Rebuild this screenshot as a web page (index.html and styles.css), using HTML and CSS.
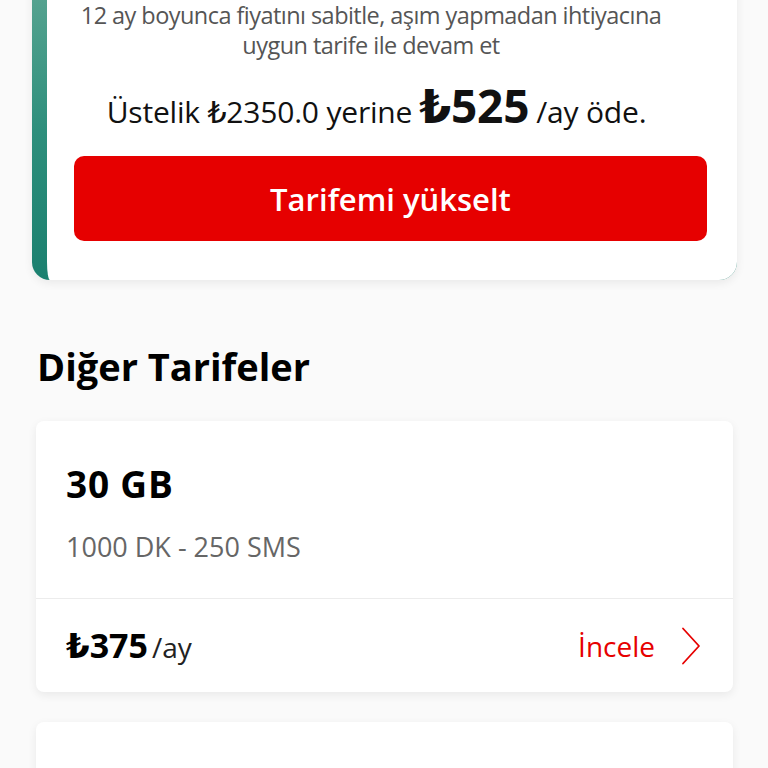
FILE: index.html
```html
<!DOCTYPE html>
<html lang="tr">
<head>
<meta charset="utf-8">
<title>Tarifeler</title>
<link rel="stylesheet" href="styles.css">
</head>
<body>
<main class="page">
  <section class="promo">
    <p class="promo-text">12 ay boyunca fiyatını sabitle, aşım yapmadan ihtiyacına uygun tarife ile devam et</p>
    <div class="promo-price">
      <span>Üstelik ₺2350.0 yerine</span>
      <strong class="promo-big">₺525</strong>
      <span>/ay öde.</span>
    </div>
    <button class="btn-primary" type="button">Tarifemi yükselt</button>
  </section>

  <h2 class="section-title">Diğer Tarifeler</h2>

  <article class="tariff">
    <div class="tariff-body">
      <h3 class="tariff-name">30 GB</h3>
      <p class="tariff-desc">1000 DK - 250 SMS</p>
    </div>
    <div class="tariff-foot">
      <div class="tariff-price"><strong>₺375</strong><span class="per">/ay</span></div>
      <a class="tariff-link" href="#">İncele
        <svg class="chev" width="20" height="38" viewBox="0 0 20 38" aria-hidden="true"><path d="M2 1.5 L18 19 L2 36.5" fill="none" stroke="#e60000" stroke-width="1.8" stroke-linecap="round" stroke-linejoin="round"/></svg>
      </a>
    </div>
  </article>

  <article class="tariff tariff-next"></article>
</main>
</body>
</html>
```

FILE: styles.css
```css
* { box-sizing: border-box; }
html, body { margin: 0; padding: 0; }
body {
  background: #fafafa;
  font-family: "Open Sans", "DejaVu Sans", sans-serif;
  color: #000;
  overflow: hidden;
  height: 768px;
}
.page {
  display: flex;
  flex-direction: column;
}
.promo {
  margin: -19px 31px 0 32px;
  border-left: 15px solid transparent;
  background:
    linear-gradient(#fff, #fff) padding-box,
    linear-gradient(180deg, #5aa592 0%, #2e8f7c 50%, #1b806f 100%) border-box;
  border-radius: 0 0 18px 18px;
  box-shadow: 0 3px 10px rgba(0,0,0,0.07);
  padding: 19px 30px 39px 27px;
  display: flex;
  flex-direction: column;
}
.promo-text {
  margin: 0 25px 0 -14px;
  font-size: 23.5px;
  letter-spacing: -0.55px;
  line-height: 30px;
  color: #555;
  text-align: center;
}
.promo-price {
  margin: 18px 28px 0 0;
  display: flex;
  justify-content: center;
  align-items: baseline;
  gap: 7px;
  font-size: 30px;
  letter-spacing: -0.2px;
  color: #111;
}
.promo-big {
  font-size: 46px;
  line-height: 55px;
  font-weight: 700;
}
.btn-primary {
  margin-top: 23px;
  height: 85px;
  border: 0;
  border-radius: 10px;
  background: #e60000;
  color: #fff;
  font-family: inherit;
  font-size: 31px;
  font-weight: 600;
}
.section-title {
  margin: 64px 0 0 37px;
  font-size: 38px;
  line-height: 44px;
  font-weight: 700;
}
.tariff {
  margin: 33px 35px 0 36px;
  background: #fff;
  border-radius: 8px;
  box-shadow: 0 3px 10px rgba(0,0,0,0.07);
}
.tariff-body {
  padding: 43px 30px 34px;
  border-bottom: 1px solid #ececec;
}
.tariff-name {
  margin: 0;
  font-size: 37px;
  letter-spacing: 0.8px;
  line-height: 40px;
  font-weight: 700;
}
.tariff-desc {
  margin: 26px 0 0;
  font-size: 27px;
  line-height: 34px;
  color: #666;
}
.tariff-foot {
  height: 93px;
  padding: 0 32px 0 30px;
  display: flex;
  align-items: center;
  justify-content: space-between;
}
.tariff-price strong {
  font-size: 34px;
  line-height: 40px;
  font-weight: 700;
}
.per {
  margin-left: 4px;
  font-size: 28px;
  color: #222;
}
.tariff-link {
  display: flex;
  align-items: center;
  gap: 26px;
  color: #e60000;
  font-size: 28px;
  text-decoration: none;
}
.tariff-next {
  margin-top: 30px;
  height: 120px;
}
```
